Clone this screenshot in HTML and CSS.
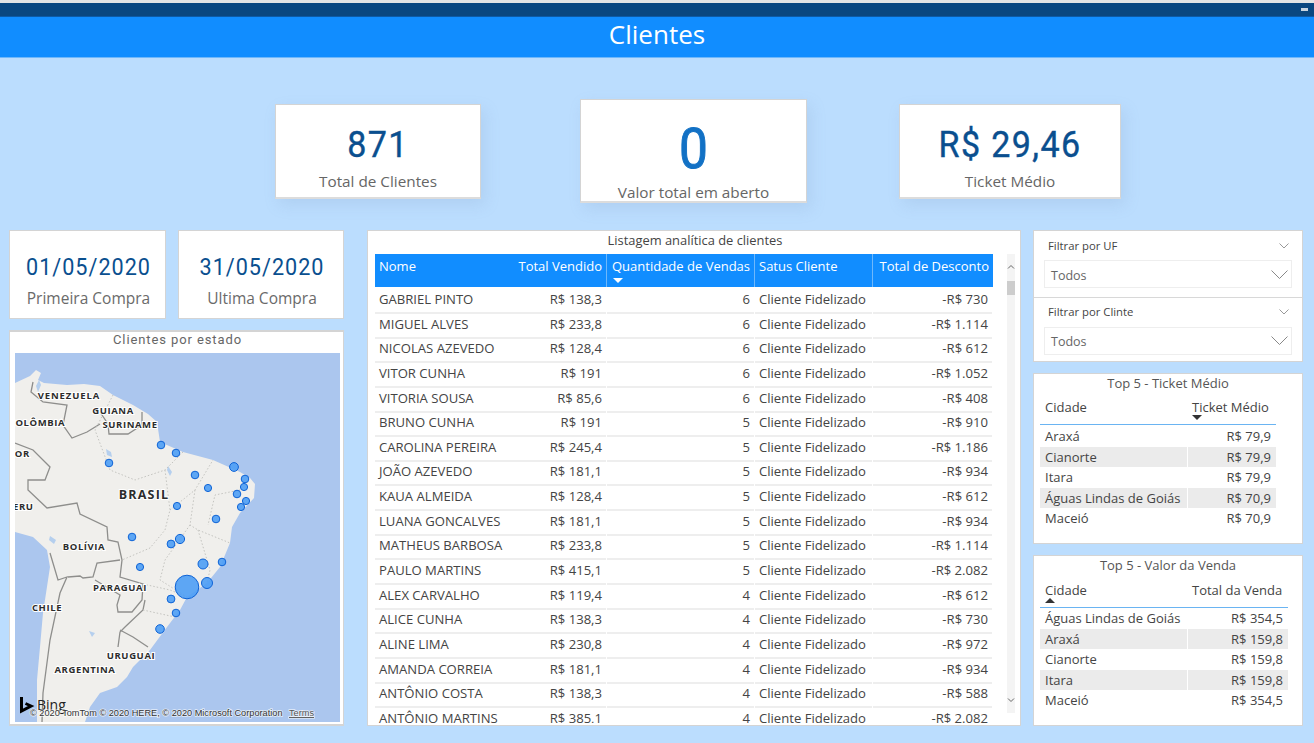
FILE: index.html
```html
<!DOCTYPE html>
<html lang="pt-BR">
<head>
    <meta charset="UTF-8">
    <title>Clientes</title>
    <link rel="stylesheet" href="styles.css">
</head>
<body>
<div class="page">
    <div class="topline"><span class="minimize"></span></div>
    <div class="titlebar">Clientes</div>

    <div class="kpis">
        <div class="card kpi">
            <div class="kpi-num">871</div>
            <div class="kpi-label">Total de Clientes</div>
        </div>
        <div class="card kpi kpi-big">
            <div class="kpi-num">0</div>
            <div class="kpi-label">Valor total em aberto</div>
        </div>
        <div class="card kpi kpi-money">
            <div class="kpi-num">R$ 29,46</div>
            <div class="kpi-label">Ticket Médio</div>
        </div>
    </div>

    <div class="main">
        <div class="col-left">
            <div class="dates">
                <div class="card date date-first">
                    <div class="date-num">01/05/2020</div>
                    <div class="date-label">Primeira Compra</div>
                </div>
                <div class="card date date-last">
                    <div class="date-num">31/05/2020</div>
                    <div class="date-label">Ultima Compra</div>
                </div>
            </div>
            <div class="card map-card">
                <div class="map-title">Clientes por estado</div>
                <div class="map">
                    <svg viewBox="15 353 325 369" width="325" height="369">
                        <rect x="15" y="353" width="325" height="369" fill="#abc6ee"/>
                        <path class="land" d="M15 383 L30 376 L36 370 L41 373 L38 380 L44 383 L67 385 L84 384 L100 386 L113 395 L133 405 L148 414 L157 422 L160 442 L183 452 L213 460 L240 472 L250 478 L255 484 L254 498 L240 513 L232 527 L230 543 L220 567 L207 583 L187 597 L180 610 L167 627 L150 650 L133 667 L127 677 L117 687 L100 693 L90 707 L85 722 L37 722 L37 680 L40 647 L43 613 L50 567 L47 550 L33 537 L15 532 Z"/>
                        <path class="lake" d="M39 380 L41 385 L38 392 L36 386 Z M106 449 L111 452 L112 457 L107 455 Z M168 466 L172 472 L170 476 L167 470 Z M50 536 L56 540 L54 544 L49 540 Z M89 631 L95 633 L92 637 Z"/>
                        <path class="border" d="M33 382 L31 392 L43 402 L67 405 L63 425 L72 438 L87 432 L100 424"/>
                        <path class="border" d="M100 412 L108 424 L109 434 L128 434 L142 425 L142 412"/>
                        <path class="border" d="M15 443 L33 450 L50 467 L45 480 L28 480 L28 490 L47 508 L77 503 L80 514 L107 527 L108 540 L118 542 L122 560 L120 577 L143 584 L142 600 L132 612 L118 612 L117 605 L120 595 L95 580"/>
                        <path class="border" d="M50 553 L58 580 L67 577 L60 593 L50 640 L43 693 L42 722"/>
                        <path class="border" d="M120 560 L97 563 L93 577 L83 578 L80 576 L68 577"/>
                        <path class="border" d="M145 600 L143 610 L125 627 L120 632 L118 647"/>
                        <path class="border" d="M120 630 L133 637 L148 647"/>
                        <path class="state" d="M113 395 L95 430 L110 470 L135 480 L165 470 L183 452"/>
                        <path class="state" d="M165 470 L170 510 L165 530 L150 548 L122 560"/>
                        <path class="state" d="M170 510 L195 490 L213 460 M195 490 L190 525 L198 530 L230 543 M190 525 L165 560 L160 580 L187 597"/>
                        <path class="state" d="M198 530 L210 570 L207 583 M240 490 L215 495 L208 525"/>
                        <path class="state" d="M143 584 L170 590 L187 597 M143 610 L175 617"/>
                        <g class="labels">
                            <text x="69" y="399" style="letter-spacing:.9px">VENEZUELA</text>
                            <text x="113" y="414">GUIANA</text>
                            <text x="130" y="428">SURINAME</text>
                            <text x="37" y="426">COLÔMBIA</text>
                            <text x="4" y="457">EQUADOR</text>
                            <text x="144" y="499" class="label-big">BRASIL</text>
                            <text x="20" y="510">PERU</text>
                            <text x="84" y="550">BOLÍVIA</text>
                            <text x="120" y="591">PARAGUAI</text>
                            <text x="47" y="611">CHILE</text>
                            <text x="131" y="659">URUGUAI</text>
                            <text x="85" y="673">ARGENTINA</text>
                        </g>
                        <g class="bubbles">
                            <circle cx="161" cy="445" r="3.8"/>
                            <circle cx="176" cy="453" r="3.8"/>
                            <circle cx="109" cy="463" r="3.8"/>
                            <circle cx="234" cy="467" r="4.4"/>
                            <circle cx="245" cy="479" r="3.8"/>
                            <circle cx="195" cy="475" r="3.8"/>
                            <circle cx="208" cy="488" r="3.6"/>
                            <circle cx="244" cy="487" r="3.6"/>
                            <circle cx="237" cy="494" r="3.8"/>
                            <circle cx="246" cy="501" r="3.6"/>
                            <circle cx="241" cy="507" r="3.6"/>
                            <circle cx="177" cy="506" r="3.6"/>
                            <circle cx="216" cy="519" r="3.8"/>
                            <circle cx="132" cy="537" r="3.8"/>
                            <circle cx="180" cy="539" r="4.6"/>
                            <circle cx="171" cy="544" r="3.9"/>
                            <circle cx="203" cy="564" r="5"/>
                            <circle cx="222" cy="562" r="3.8"/>
                            <circle cx="140" cy="567" r="3.6"/>
                            <circle cx="187" cy="587" r="11.8"/>
                            <circle cx="207" cy="583" r="5.5"/>
                            <circle cx="171" cy="599" r="3.9"/>
                            <circle cx="176" cy="613" r="3.8"/>
                            <circle cx="160" cy="629" r="4.3"/>
                        </g>
                        <path d="M21.500 697 V711 L31 706 L25.500 703.500" fill="none" stroke="#000" stroke-width="3"/>
                        <text x="37" y="710" class="bing">Bing</text>
                        <text x="30" y="716" class="attrib">© 2020 TomTom © 2020 HERE, © 2020 Microsoft Corporation</text>
                        <text x="289" y="716" class="attrib attrib-link">Terms</text>
                    </svg>
                </div>
            </div>
        </div>

        <div class="card list">
            <div class="list-title">Listagem analítica de clientes</div>
            <div class="list-body">
                <div class="grid">
                    <div class="row head">
                        <div>Nome</div>
                        <div class="num sep">Total Vendido</div>
                        <div class="sep sorted">Quantidade de Vendas<i class="arrow-down white"></i></div>
                        <div class="sep">Satus Cliente</div>
                        <div class="num">Total de Desconto</div>
                    </div>
                    <div class="row"><div>GABRIEL PINTO</div><div class="num">R$ 138,3</div><div class="num">6</div><div>Cliente Fidelizado</div><div class="num">-R$ 730</div></div>
                    <div class="row"><div>MIGUEL ALVES</div><div class="num">R$ 233,8</div><div class="num">6</div><div>Cliente Fidelizado</div><div class="num">-R$ 1.114</div></div>
                    <div class="row"><div>NICOLAS AZEVEDO</div><div class="num">R$ 128,4</div><div class="num">6</div><div>Cliente Fidelizado</div><div class="num">-R$ 612</div></div>
                    <div class="row"><div>VITOR CUNHA</div><div class="num">R$ 191</div><div class="num">6</div><div>Cliente Fidelizado</div><div class="num">-R$ 1.052</div></div>
                    <div class="row"><div>VITORIA SOUSA</div><div class="num">R$ 85,6</div><div class="num">6</div><div>Cliente Fidelizado</div><div class="num">-R$ 408</div></div>
                    <div class="row"><div>BRUNO CUNHA</div><div class="num">R$ 191</div><div class="num">5</div><div>Cliente Fidelizado</div><div class="num">-R$ 910</div></div>
                    <div class="row"><div>CAROLINA PEREIRA</div><div class="num">R$ 245,4</div><div class="num">5</div><div>Cliente Fidelizado</div><div class="num">-R$ 1.186</div></div>
                    <div class="row"><div>JOÃO AZEVEDO</div><div class="num">R$ 181,1</div><div class="num">5</div><div>Cliente Fidelizado</div><div class="num">-R$ 934</div></div>
                    <div class="row"><div>KAUA ALMEIDA</div><div class="num">R$ 128,4</div><div class="num">5</div><div>Cliente Fidelizado</div><div class="num">-R$ 612</div></div>
                    <div class="row"><div>LUANA GONCALVES</div><div class="num">R$ 181,1</div><div class="num">5</div><div>Cliente Fidelizado</div><div class="num">-R$ 934</div></div>
                    <div class="row"><div>MATHEUS BARBOSA</div><div class="num">R$ 233,8</div><div class="num">5</div><div>Cliente Fidelizado</div><div class="num">-R$ 1.114</div></div>
                    <div class="row"><div>PAULO MARTINS</div><div class="num">R$ 415,1</div><div class="num">5</div><div>Cliente Fidelizado</div><div class="num">-R$ 2.082</div></div>
                    <div class="row"><div>ALEX CARVALHO</div><div class="num">R$ 119,4</div><div class="num">4</div><div>Cliente Fidelizado</div><div class="num">-R$ 612</div></div>
                    <div class="row"><div>ALICE CUNHA</div><div class="num">R$ 138,3</div><div class="num">4</div><div>Cliente Fidelizado</div><div class="num">-R$ 730</div></div>
                    <div class="row"><div>ALINE LIMA</div><div class="num">R$ 230,8</div><div class="num">4</div><div>Cliente Fidelizado</div><div class="num">-R$ 972</div></div>
                    <div class="row"><div>AMANDA CORREIA</div><div class="num">R$ 181,1</div><div class="num">4</div><div>Cliente Fidelizado</div><div class="num">-R$ 934</div></div>
                    <div class="row"><div>ANTÔNIO COSTA</div><div class="num">R$ 138,3</div><div class="num">4</div><div>Cliente Fidelizado</div><div class="num">-R$ 588</div></div>
                    <div class="row"><div>ANTÔNIO MARTINS</div><div class="num">R$ 385,1</div><div class="num">4</div><div>Cliente Fidelizado</div><div class="num">-R$ 2.082</div></div>
                </div>
                <div class="scroll">
                    <svg class="scroll-arrow" width="8" height="6" viewBox="0 0 8 6"><path d="M1 4.500 L4 1.500 L7 4.500" fill="none" stroke="#666"/></svg>
                    <div class="thumb"></div>
                    <svg class="scroll-arrow" width="8" height="6" viewBox="0 0 8 6"><path d="M1 1.500 L4 4.500 L7 1.500" fill="none" stroke="#666"/></svg>
                </div>
            </div>
        </div>

        <div class="col-right">
            <div class="card filters">
                <div class="filter">
                    <div class="filter-head">
                        <span>Filtrar por UF</span>
                        <svg width="10" height="6" viewBox="0 0 10 6"><path d="M.5 .5 L5 5 L9.500 .5" fill="none" stroke="#999"/></svg>
                    </div>
                    <div class="select">
                        <span>Todos</span>
                        <svg width="17" height="10" viewBox="0 0 17 10"><path d="M.5 .5 L8.500 8.500 L16.500 .5" fill="none" stroke="#888"/></svg>
                    </div>
                </div>
                <div class="filter">
                    <div class="filter-head">
                        <span>Filtrar por Clinte</span>
                        <svg width="10" height="6" viewBox="0 0 10 6"><path d="M.5 .5 L5 5 L9.500 .5" fill="none" stroke="#999"/></svg>
                    </div>
                    <div class="select">
                        <span>Todos</span>
                        <svg width="17" height="10" viewBox="0 0 17 10"><path d="M.5 .5 L8.500 8.500 L16.500 .5" fill="none" stroke="#888"/></svg>
                    </div>
                </div>
            </div>

            <div class="card top top-ticket">
                <div class="top-title">Top 5 - Ticket Médio</div>
                <div class="top-head">
                    <div>Cidade</div>
                    <div class="top-sort">Ticket Médio<i class="arrow-down dark"></i></div>
                </div>
                <div class="top-row"><div>Araxá</div><div>R$ 79,9</div></div>
                <div class="top-row"><div>Cianorte</div><div>R$ 79,9</div></div>
                <div class="top-row"><div>Itara</div><div>R$ 79,9</div></div>
                <div class="top-row"><div>Águas Lindas de Goiás</div><div>R$ 70,9</div></div>
                <div class="top-row"><div>Maceió</div><div>R$ 70,9</div></div>
            </div>

            <div class="card top top-venda">
                <div class="top-title">Top 5 - Valor da Venda</div>
                <div class="top-head">
                    <div class="top-sort">Cidade<i class="arrow-up dark"></i></div>
                    <div>Total da Venda</div>
                </div>
                <div class="top-row"><div>Águas Lindas de Goiás</div><div>R$ 354,5</div></div>
                <div class="top-row"><div>Araxá</div><div>R$ 159,8</div></div>
                <div class="top-row"><div>Cianorte</div><div>R$ 159,8</div></div>
                <div class="top-row"><div>Itara</div><div>R$ 159,8</div></div>
                <div class="top-row"><div>Maceió</div><div>R$ 354,5</div></div>
            </div>
        </div>
    </div>
</div>
</body>
</html>
```

FILE: styles.css
```css
*{
    margin: 0;
    padding: 0;
    box-sizing: border-box;
}
body{
    background-color: #bbddfe;
    font-family: "Open Sans", "Noto Sans", sans-serif;
    color: #444;
    overflow: hidden;
}
.page{
    width: 1314px;
    height: 743px;
    overflow: hidden;
}
.topline{
    height: 17px;
    background-color: #0a4780;
    border-top: 3px solid #e4e4e4;
    border-bottom: 1px solid #0d5aa6;
    display: flex;
    justify-content: flex-end;
    padding: 5px 6px 0 0;
}
.minimize{
    width: 7px;
    height: 3px;
    background-color: #c8d4e0;
}
.titlebar{
    height: 41px;
    background-color: #118dff;
    border-bottom: 1px solid #6fb8fb;
    color: #fff;
    font-size: 26px;
    line-height: 34px;
    text-align: center;
}
.card{
    background-color: #fff;
    border: 1px solid #d4d4d4;
}

/* numeros do topo */
.kpis{
    height: 104px;
    margin-top: 41px;
    padding-left: 275px;
    display: flex;
    align-items: center;
}
.kpi{
    width: 206px;
    height: 95px;
    text-align: center;
    padding-top: 18px;
    box-shadow: 4px 6px 14px rgba(120, 150, 190, .18);
    border-bottom: 2px solid #dcdcdc;
}
.kpi-num{
    font-family: Roboto, sans-serif;
    font-size: 37px;
    line-height: 44px;
    color: #0a4f8f;
    letter-spacing: 1.500px;
    -webkit-text-stroke: .4px #0a4f8f;
    transform: scaleX(.92);
}
.kpi-label{
    margin-top: 4px;
    font-size: 15.300px;
    line-height: 20px;
    color: #666;
}
.kpi-big{
    width: 227px;
    height: 104px;
    margin-left: 99px;
    padding-top: 19px;
}
.kpi-big .kpi-num{
    font-size: 56px;
    line-height: 60px;
    color: #1271c5;
    letter-spacing: 0;
    -webkit-text-stroke: 1px #1271c5;
}
.kpi-big .kpi-label{
    margin-top: 3px;
}
.kpi-money{
    width: 222px;
    margin-left: 92px;
}

.main{
    margin-top: 27px;
    padding-left: 9px;
    height: 496px;
    display: flex;
}

/* coluna esquerda */
.col-left{
    width: 335px;
    display: flex;
    flex-direction: column;
    gap: 11px;
}
.dates{
    display: flex;
    gap: 12px;
}
.date{
    height: 89px;
    text-align: center;
    padding: 22px 0 0 2px;
    width: 157px;
}
.date-last{
    width: 166px;
}
.date-num{
    font-family: Roboto, sans-serif;
    font-size: 24px;
    line-height: 28px;
    color: #0a4f8f;
    letter-spacing: 1.100px;
    transform: scaleX(.9);
}
.date-label{
    margin-top: 7px;
    font-size: 15.500px;
    line-height: 20px;
    color: #6a6a6a;
}
.map-card{
    flex: 1;
    border-width: 2px 1px;
    border-color: #d4d4d4;
    padding: 0 3px 2px 5px;
}
.map-title{
    height: 21px;
    font-family: Roboto, sans-serif;
    font-size: 13px;
    line-height: 15px;
    letter-spacing: .9px;
    color: #666;
    text-align: center;
}
.map svg{
    display: block;
}
.land{
    fill: #f0efec;
}
.lake{
    fill: #b5cfee;
}
.border{
    fill: none;
    stroke: #8e8e8c;
    stroke-width: 1.300;
}
.state{
    fill: none;
    stroke: #c4c4c0;
    stroke-width: 1;
    stroke-dasharray: 1.500 2;
}
.labels text{
    font-family: "Open Sans", sans-serif;
    font-size: 9.500px;
    font-weight: 700;
    letter-spacing: .6px;
    text-anchor: middle;
    fill: #2c2c2c;
    paint-order: stroke;
    stroke: #fff;
    stroke-width: 2px;
}
.labels .label-big{
    font-size: 12.500px;
    letter-spacing: 1.200px;
}
.bubbles circle{
    fill: #4c9df5;
    fill-opacity: .9;
    stroke: #0e63d6;
    stroke-width: 1;
}
.bing{
    font-family: "Open Sans", sans-serif;
    font-size: 14px;
    fill: #222;
}
.attrib{
    font-family: "Liberation Sans", sans-serif;
    font-size: 9.200px;
    fill: #333;
    paint-order: stroke;
    stroke: rgba(255, 255, 255, .7);
    stroke-width: 1.500px;
}
.attrib-link{
    text-decoration: underline;
    fill: #555;
}

/* tabela do meio */
.list{
    width: 654px;
    margin-left: 23px;
    padding-left: 7px;
    overflow: hidden;
}
.list-title{
    height: 23px;
    padding-right: 5px;
    font-size: 12.900px;
    line-height: 18px;
    color: #444;
    text-align: center;
}
.list-body{
    height: 469px;
    overflow: hidden;
    display: flex;
    gap: 14px;
}
.grid{
    width: 618px;
}
.row{
    display: grid;
    grid-template-columns: 131px 101px 148px 118px 120px;
    height: 24.650px;
    font-size: 13.100px;
    line-height: 25px;
    color: #444;
}
.row > div{
    padding: 0 4px;
    border-bottom: 2px solid #eee;
    border-right: 1px solid #fff;
    white-space: nowrap;
}
.row > div:first-child{
    border-right: 0;
}
.row .num{
    text-align: right;
}
.row.head{
    height: 33px;
    background-color: #118dff;
    color: #fff;
    line-height: 25px;
    font-size: 13px;
}
.row.head > div{
    border: 0;
    position: relative;
}
.row.head .sep{
    border-right: 1px solid #6fb8fb;
}
.row.head .sorted{
    padding: 0 0 0 5px;
}
.arrow-down, .arrow-up{
    position: absolute;
    width: 0;
    height: 0;
    border-left: 5px solid transparent;
    border-right: 5px solid transparent;
}
.arrow-down.white{
    left: 6px;
    bottom: 4px;
    border-top: 5px solid #fff;
}
.arrow-down.dark{
    left: 5px;
    bottom: 4px;
    border-top: 5px solid #333;
}
.arrow-up.dark{
    left: 5px;
    bottom: 4px;
    border-bottom: 5px solid #333;
}
.scroll{
    width: 8px;
    height: 459px;
    background-color: #f4f4f4;
    position: relative;
}
.scroll-arrow{
    display: block;
    position: absolute;
    top: 10px;
}
.scroll-arrow:last-child{
    top: 443px;
}
.thumb{
    position: absolute;
    top: 27px;
    width: 8px;
    height: 14px;
    background-color: #cdcdcd;
}

/* coluna direita */
.col-right{
    width: 270px;
    margin-left: 12px;
    display: flex;
    flex-direction: column;
    gap: 11px;
}
.filters{
    height: 132px;
}
.filter{
    height: 66px;
    padding: 0 10px;
}
.filter + .filter{
    border-top: 1px solid #d8d8d8;
}
.filter-head{
    height: 29px;
    padding: 0 3px 0 4px;
    display: flex;
    justify-content: space-between;
    align-items: center;
    font-size: 11.300px;
    color: #444;
}
.filter + .filter .filter-head{
    height: 29px;
    padding-bottom: 2px;
}
.select{
    height: 28px;
    border: 1px solid #eee;
    padding: 2px 3px 0 6px;
    display: flex;
    justify-content: space-between;
    align-items: center;
    font-size: 12.500px;
    color: #666;
}
.filter + .filter .select{
    padding-top: 0;
}
.top{
    padding: 0 0 0 6px;
}
.top-ticket, .top-venda{
    height: 171px;
}
.top-title{
    height: 20px;
    font-size: 13px;
    line-height: 18px;
    text-align: center;
    padding-right: 6px;
    color: #555;
}
.top-head, .top-row{
    display: grid;
    font-size: 13px;
}
.top-ticket .top-head, .top-ticket .top-row{
    grid-template-columns: 147px 89px;
    width: 236px;
}
.top-venda .top-head, .top-venda .top-row{
    grid-template-columns: 147px 101px;
    width: 248px;
}
.top-head{
    height: 31px;
    line-height: 27px;
    border-bottom: 1px solid #6ab4f2;
    margin-bottom: 1px;
}
.top-venda .top-head{
    height: 32px;
    line-height: 29px;
    margin-bottom: 0;
}
.top-head > div{
    padding-left: 5px;
    position: relative;
}
.top-row{
    height: 20.600px;
    line-height: 20px;
    color: #444;
}
.top-row > div{
    padding: 0 5px;
    white-space: nowrap;
}
.top-row > div:last-child{
    text-align: right;
    border-left: 1px solid #fff;
}
.top-row:nth-child(4), .top-row:nth-child(6){
    background-color: #ebebeb;
}
```
